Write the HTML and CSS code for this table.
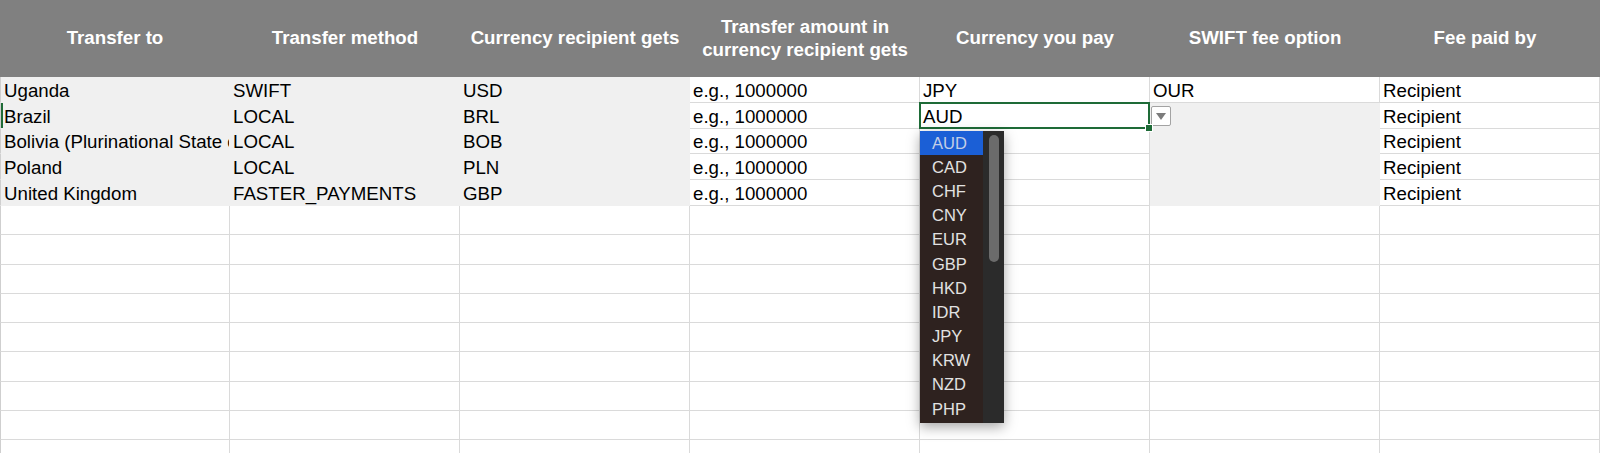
FILE: index.html
```html
<!DOCTYPE html>
<html lang="en">
<head>
  <meta charset="UTF-8" />
  <meta name="viewport" content="width=device-width, initial-scale=1.0"/>
  <title>Transfers</title>
  <link rel="stylesheet" href="styles.css">
</head>
<body>

  <table class="grid">
    <colgroup>
      <col class="col"><col class="col"><col class="col"><col class="col">
      <col class="col"><col class="col"><col class="col last">
    </colgroup>
    <thead>
      <tr class="head">
        <th>Transfer to</th>
        <th>Transfer method</th>
        <th>Currency recipient gets</th>
        <th>Transfer amount in<br>currency recipient gets</th>
        <th>Currency you pay</th>
        <th>SWIFT fee option</th>
        <th>Fee paid by</th>
      </tr>
    </thead>
    <tbody>
      <tr class="row">
        <td class="shade">Uganda</td>
        <td class="shade">SWIFT</td>
        <td class="shade">USD</td>
        <td>e.g., 1000000</td>
        <td>JPY</td>
        <td>OUR</td>
        <td>Recipient</td>
      </tr>
      <tr class="row">
        <td class="shade mark">Brazil</td>
        <td class="shade">LOCAL</td>
        <td class="shade">BRL</td>
        <td>e.g., 1000000</td>
        <td class="active">AUD
          <span class="handle"></span>
          <span class="pick"></span>
          <div class="menu">
            <ul class="opts">
              <li class="on">AUD</li>
              <li>CAD</li>
              <li>CHF</li>
              <li>CNY</li>
              <li>EUR</li>
              <li>GBP</li>
              <li>HKD</li>
              <li>IDR</li>
              <li>JPY</li>
              <li>KRW</li>
              <li>NZD</li>
              <li>PHP</li>
            </ul>
            <div class="track"><div class="thumb"></div></div>
          </div>
        </td>
        <td class="shade"></td>
        <td>Recipient</td>
      </tr>
      <tr class="row">
        <td class="shade">Bolivia (Plurinational State of)</td>
        <td class="shade">LOCAL</td>
        <td class="shade">BOB</td>
        <td>e.g., 1000000</td>
        <td></td>
        <td class="shade"></td>
        <td>Recipient</td>
      </tr>
      <tr class="row">
        <td class="shade">Poland</td>
        <td class="shade">LOCAL</td>
        <td class="shade">PLN</td>
        <td>e.g., 1000000</td>
        <td></td>
        <td class="shade"></td>
        <td>Recipient</td>
      </tr>
      <tr class="row">
        <td class="shade">United Kingdom</td>
        <td class="shade">FASTER_PAYMENTS</td>
        <td class="shade">GBP</td>
        <td>e.g., 1000000</td>
        <td></td>
        <td class="shade"></td>
        <td>Recipient</td>
      </tr>
      <tr class="blank"><td></td><td></td><td></td><td></td><td></td><td></td><td></td></tr>
      <tr class="blank"><td></td><td></td><td></td><td></td><td></td><td></td><td></td></tr>
      <tr class="blank"><td></td><td></td><td></td><td></td><td></td><td></td><td></td></tr>
      <tr class="blank"><td></td><td></td><td></td><td></td><td></td><td></td><td></td></tr>
      <tr class="blank"><td></td><td></td><td></td><td></td><td></td><td></td><td></td></tr>
      <tr class="blank"><td></td><td></td><td></td><td></td><td></td><td></td><td></td></tr>
      <tr class="blank"><td></td><td></td><td></td><td></td><td></td><td></td><td></td></tr>
      <tr class="blank"><td></td><td></td><td></td><td></td><td></td><td></td><td></td></tr>
      <tr class="blank"><td></td><td></td><td></td><td></td><td></td><td></td><td></td></tr>
    </tbody>
  </table>

</body>
</html>
```

FILE: styles.css
```css
body {
  margin: 0;
  font-family: "Liberation Sans", Arial, sans-serif;
  background: #fff;
  color: #000;
  overflow: hidden;
}

.grid {
  border-collapse: separate;
  border-spacing: 0;
  table-layout: fixed;
  width: 1600px;
}

.col {
  width: 230px;
}

.last {
  width: 220px;
}

.head {
  height: 77px;
}

.head th {
  background: #808080;
  color: #fff;
  font-size: 18.7px;
  font-weight: bold;
  line-height: 22.5px;
  padding: 0 4px;
  text-align: center;
}

.head th:last-child {
  padding-right: 14px;
}

.row {
  height: 25.8px;
}

.blank {
  height: 29.3px;
}

td {
  font-size: 18.7px;
  padding: 0 3px 0 3px;
  border-right: 1px solid #dadada;
  border-bottom: 1px solid #dadada;
  white-space: nowrap;
  overflow: hidden;
  vertical-align: bottom;
}

td:first-child {
  border-left: 1px solid #cfcfcf;
}

.shade {
  background: #f0f0f0;
  border-right-color: #f0f0f0;
  border-bottom-color: #f0f0f0;
}

.mark {
  box-shadow: inset 2px 0 0 #1e6b37;
}

/* selected cell with the open list */
.active {
  position: relative;
  overflow: visible;
}

.active::after {
  content: "";
  position: absolute;
  left: -1px;
  top: -1px;
  right: -1px;
  bottom: -1px;
  border: 2px solid #1e6b37;
  pointer-events: none;
}

.handle {
  position: absolute;
  right: -4px;
  bottom: -4px;
  width: 6px;
  height: 6px;
  background: #1e6b37;
  border: 1px solid #fff;
  z-index: 1;
}

.pick {
  position: absolute;
  left: calc(100% + 2px);
  top: 3px;
  width: 20px;
  height: 20px;
  box-sizing: border-box;
  background: #fff;
  border: 1px solid #a3a3a3;
  border-radius: 2px;
  display: flex;
  align-items: center;
  justify-content: center;
}

.pick::before {
  content: "";
  border-left: 5px solid transparent;
  border-right: 5px solid transparent;
  border-top: 7px solid #7c7c7c;
  margin-top: 1px;
}

.menu {
  position: absolute;
  left: 0;
  top: calc(100% + 3px);
  width: 84px;
  height: 292px;
  display: flex;
  background: #2e221f;
  box-shadow: 0 4px 12px rgba(0, 0, 0, 0.35);
  z-index: 2;
}

.opts {
  list-style: none;
  margin: 0;
  padding: 0;
  width: 63px;
}

.opts li {
  height: 24.2px;
  line-height: 25px;
  padding-left: 12px;
  font-size: 16.5px;
  color: #e2e2e2;
}

.opts .on {
  background: #1b5fd6;
  color: #c3cfe6;
}

.track {
  width: 21px;
  background: #2b2b2b;
}

.thumb {
  width: 10px;
  height: 127px;
  margin: 4px auto 0;
  border-radius: 5px;
  background: #6b6b6b;
}
```
